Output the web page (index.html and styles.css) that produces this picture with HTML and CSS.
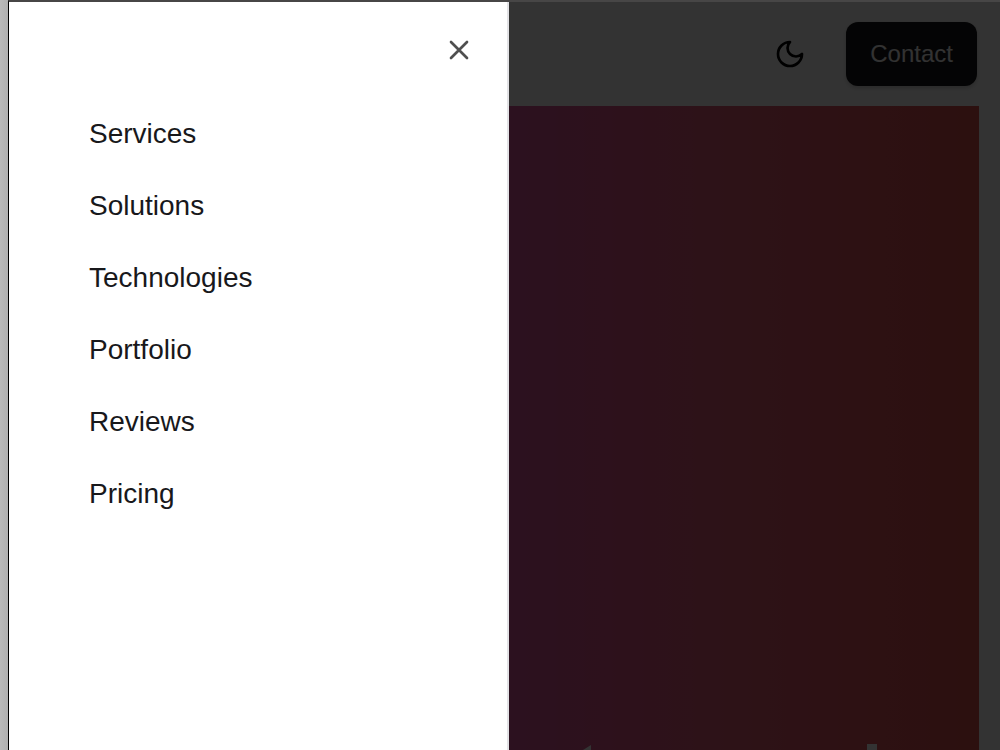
FILE: index.html
```html
<!DOCTYPE html>
<html lang="en">
<head>
<meta charset="utf-8">
<meta name="viewport" content="width=device-width, initial-scale=1">
<title>Menu</title>
<link rel="stylesheet" href="styles.css">
</head>
<body>
<div class="window">
  <div class="page">
    <header class="header">
      <button class="theme-toggle" type="button" aria-label="Toggle theme">
        <svg class="icon" viewBox="0 0 24 24" aria-hidden="true"><path d="M12 3a6 6 0 0 0 9 9 9 9 0 1 1-9-9Z"/></svg>
      </button>
      <button class="contact" type="button">Contact</button>
    </header>
    <main class="hero">
      <svg class="hero-art" width="294" height="7" viewBox="0 0 294 7" aria-hidden="true"><path d="M0 7 8 2V7Z"/><path d="M284 1h10v6h-10Z"/></svg>
    </main>
  </div>
  <div class="overlay"></div>
  <aside class="drawer" role="dialog" aria-label="Navigation">
    <button class="close" type="button" aria-label="Close">
      <svg class="icon" viewBox="0 0 24 24" aria-hidden="true"><path d="M18 6 6 18M6 6l12 12"/></svg>
    </button>
    <nav class="menu">
      <a href="#services">Services</a>
      <a href="#solutions">Solutions</a>
      <a href="#technologies">Technologies</a>
      <a href="#portfolio">Portfolio</a>
      <a href="#reviews">Reviews</a>
      <a href="#pricing">Pricing</a>
    </nav>
  </aside>
</div>
</body>
</html>
```
FILE: styles.css
```css
* {
  box-sizing: border-box;
}

body {
  margin: 0;
  padding-left: 8px;
  background: linear-gradient(90deg, #bababa, #b0b0b0 8px);
  font-family: "Liberation Sans", Arial, sans-serif;
}

button {
  border: 0;
  font: inherit;
  cursor: pointer;
}

.window {
  position: relative;
  height: 100vh;
  overflow: hidden;
  border-top: 2px solid #474646;
  border-left: 1px solid #000;
}

.page {
  display: flex;
  flex-direction: column;
  height: 100%;
  background: #fff;
}

.header {
  display: flex;
  align-items: center;
  justify-content: flex-end;
  gap: 40px;
  padding: 20px 23px;
}

.icon {
  display: block;
  width: 32px;
  height: 32px;
  fill: none;
  stroke: currentColor;
  stroke-width: 2;
  stroke-linecap: round;
  stroke-linejoin: round;
}

.theme-toggle {
  padding: 0;
  background: none;
  color: #000;
}

.contact {
  height: 64px;
  padding: 0 24px;
  border-radius: 12px;
  background: #18181b;
  box-shadow: 0 2px 4px rgba(0, 0, 0, 0.2);
  color: #fafafa;
  font-size: 24px;
}

.hero {
  display: flex;
  flex: 1;
  align-items: flex-end;
  justify-content: flex-end;
  margin: 0 21px;
  padding-right: 102px;
  background: linear-gradient(90deg, #d755c8, #dc559b 51%, #e15a73 75%, #dc504b);
}

.hero-art {
  display: block;
  fill: #fff;
}

.overlay {
  position: absolute;
  inset: 0;
  background: rgba(0, 0, 0, 0.8);
}

.drawer {
  position: absolute;
  top: 0;
  bottom: 0;
  left: 0;
  display: flex;
  flex-direction: column;
  width: 500px;
  max-width: 75%;
  padding: 32px;
  border-right: 2px solid #e2e2e5;
  background: #fff;
}

.close {
  align-self: flex-end;
  padding: 0;
  background: none;
  color: #4f4f4f;
}

.menu {
  display: flex;
  flex-direction: column;
  gap: 32px;
  padding: 48px;
}

.menu a {
  color: #18181b;
  font-size: 28px;
  line-height: 40px;
  text-decoration: none;
}
```
